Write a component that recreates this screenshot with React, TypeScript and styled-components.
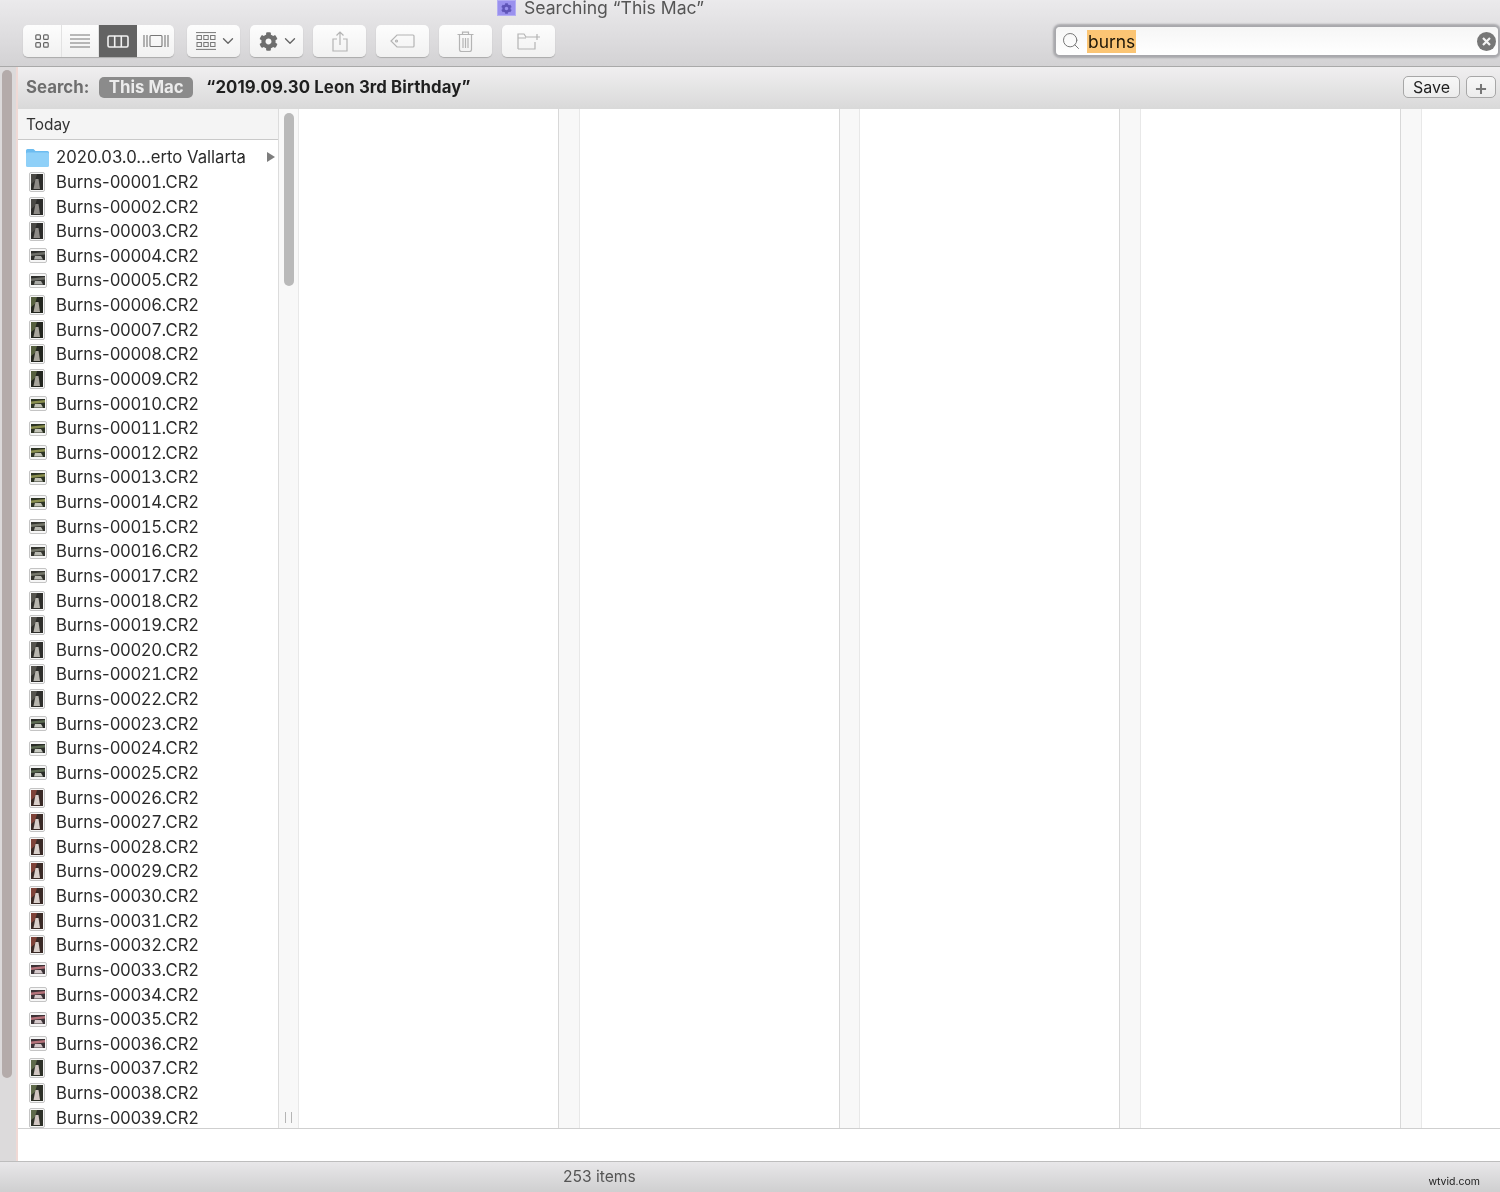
import React from 'react';
import styled, { createGlobalStyle } from 'styled-components';
import { ChevronDown, Search as SearchGlyph } from 'lucide-react';
import { FaCog } from 'react-icons/fa';

const GlobalStyle = createGlobalStyle`
  html, body {
    margin: 0;
    padding: 0;
    background: #fff;
  }
  * {
    box-sizing: border-box;
  }
`;

type Shot = { wide?: boolean; base: string; light: string; accent: string };

const groups: { count: number; shot: Shot }[] = [
  { count: 3, shot: { base: '#2c2c2a', light: '#8d8a86', accent: '#4a4945' } },
  { count: 2, shot: { wide: true, base: '#2e2f2c', light: '#a9aaa6', accent: '#6d6e68' } },
  { count: 4, shot: { base: '#23261f', light: '#a8a59c', accent: '#56603f' } },
  { count: 5, shot: { wide: true, base: '#2c3324', light: '#c3c4b8', accent: '#8a8f4f' } },
  { count: 3, shot: { wide: true, base: '#34352f', light: '#b9bab2', accent: '#74766a' } },
  { count: 5, shot: { base: '#2f2f2c', light: '#b7b5ae', accent: '#55544e' } },
  { count: 3, shot: { wide: true, base: '#2a2c28', light: '#c8cac2', accent: '#5c6a52' } },
  { count: 7, shot: { base: '#3a2a26', light: '#d9cfca', accent: '#7e4238' } },
  { count: 4, shot: { wide: true, base: '#3b3236', light: '#d5c9cb', accent: '#b5727a' } },
  { count: 3, shot: { base: '#2e3128', light: '#d2c6c2', accent: '#5f6a4a' } },
];

const files = groups.flatMap((g) => Array.from({ length: g.count }, () => g.shot));

const fileNumber = (i: number) => String(i + 1).padStart(5, '0');

export default function App() {
  return (
    <>
      <GlobalStyle />
      <Window>
        <Toolbar>
          <TitleRow>
            <ProxyIcon>
              <FaCog size={11} color="#5f55b8" />
            </ProxyIcon>
            <span>Searching “This Mac”</span>
          </TitleRow>
          <ToolRow>
            <Segments>
              <Segment>
                <svg width="14" height="14" viewBox="0 0 14 14" fill="none" stroke="#666" strokeWidth="1.2">
                  <rect x="0.8" y="0.8" width="4.6" height="4.6" rx="1" />
                  <rect x="8.6" y="0.8" width="4.6" height="4.6" rx="1" />
                  <rect x="0.8" y="8.6" width="4.6" height="4.6" rx="1" />
                  <rect x="8.6" y="8.6" width="4.6" height="4.6" rx="1" />
                </svg>
              </Segment>
              <Segment>
                <svg width="20" height="14" viewBox="0 0 20 14" stroke="#777" strokeWidth="1.1">
                  <path d="M0 1h20M0 5h20M0 9h20M0 13h20" />
                </svg>
              </Segment>
              <Segment $active>
                <svg width="22" height="13" viewBox="0 0 22 13" fill="none" stroke="#f2f2f2" strokeWidth="1.6">
                  <rect x="1" y="1" width="20" height="11" rx="1.5" />
                  <path d="M7.7 1v11M14.3 1v11" />
                </svg>
              </Segment>
              <Segment>
                <svg width="26" height="14" viewBox="0 0 26 14" fill="none" stroke="#777" strokeWidth="1.1">
                  <rect x="7" y="1.5" width="12" height="11" rx="1" />
                  <path d="M1 1v12M4 1v12M22 1v12M25 1v12" />
                </svg>
              </Segment>
            </Segments>
            <ToolButton $menu>
              <svg width="20" height="18" viewBox="0 0 20 18" fill="none" stroke="#777" strokeWidth="1">
                <path d="M0 .6h20M0 17.4h20" />
                <rect x="1" y="3.5" width="4.4" height="4" />
                <rect x="7.8" y="3.5" width="4.4" height="4" />
                <rect x="14.6" y="3.5" width="4.4" height="4" />
                <rect x="1" y="10.5" width="4.4" height="4" />
                <rect x="7.8" y="10.5" width="4.4" height="4" />
                <rect x="14.6" y="10.5" width="4.4" height="4" />
              </svg>
              <ChevronDown size={18} strokeWidth={1.8} color="#666" />
            </ToolButton>
            <ToolButton $menu>
              <FaCog size={19} color="#6e6e6e" />
              <ChevronDown size={18} strokeWidth={1.8} color="#666" />
            </ToolButton>
            <ToolButton>
              <svg width="16" height="21" viewBox="0 0 16 21" fill="none" stroke="#b4b4b4" strokeWidth="1.2">
                <path d="M5 8H1v12h14V8h-4M8 14V1M4.5 4.5 8 1l3.5 3.5" />
              </svg>
            </ToolButton>
            <ToolButton>
              <svg width="25" height="14" viewBox="0 0 25 14" fill="none" stroke="#b4b4b4" strokeWidth="1.2">
                <path d="M7 1h16a1 1 0 0 1 1 1v10a1 1 0 0 1-1 1H7L1 7z" />
                <circle cx="6.5" cy="7" r="1" />
              </svg>
            </ToolButton>
            <ToolButton>
              <svg width="17" height="21" viewBox="0 0 17 21" fill="none" stroke="#b4b4b4" strokeWidth="1.2">
                <path d="M.5 3.5h16M5.5 3.5V1.2h6v2.3M2.5 3.5v15a2 2 0 0 0 2 2h8a2 2 0 0 0 2-2v-15M6 7v10M8.5 7v10M11 7v10" />
              </svg>
            </ToolButton>
            <ToolButton>
              <svg width="24" height="17" viewBox="0 0 24 17" fill="none" stroke="#b4b4b4" strokeWidth="1.2">
                <path d="M1 16V1h6l2 3h9M1 16h17v-7M1 5h8M20 1v6M17 4h6" />
              </svg>
            </ToolButton>
            <SearchField>
              <SearchGlyph size={20} strokeWidth={1.2} color="#777" />
              <Query>burns</Query>
              <ClearButton>
                <svg width="19" height="19" viewBox="0 0 19 19">
                  <circle cx="9.5" cy="9.5" r="9.5" fill="#777" />
                  <path d="M6 6l7 7M13 6l-7 7" stroke="#f4f4f4" strokeWidth="2.2" />
                </svg>
              </ClearButton>
            </SearchField>
          </ToolRow>
        </Toolbar>

        <Body>
          <SideStrip>
            <StripThumb />
          </SideStrip>
          <Main>
            <ScopeBar>
              <ScopeLabel>Search:</ScopeLabel>
              <ScopePill>This Mac</ScopePill>
              <ScopeName>“2019.09.30 Leon 3rd Birthday”</ScopeName>
              <ScopeActions>
                <SmallButton $wide>Save</SmallButton>
                <SmallButton>+</SmallButton>
              </ScopeActions>
            </ScopeBar>
            <Columns>
              <FileColumn>
                <ColumnHeader>Today</ColumnHeader>
                <FileList>
                  <FileRow>
                    <IconSlot>
                      <svg width="23" height="19" viewBox="0 0 23 19">
                        <path d="M0 2.5A1.5 1.5 0 0 1 1.5 1h6L9.5 3H21.5A1.5 1.5 0 0 1 23 4.5V6H0z" fill="#6cbcf0" />
                        <rect y="4.5" width="23" height="14.5" rx="1.5" fill="#8fd0f8" />
                      </svg>
                    </IconSlot>
                    <FileName>2020.03.0...erto Vallarta</FileName>
                    <Disclosure />
                  </FileRow>
                  {files.map((shot, i) => (
                    <FileRow key={i}>
                      <IconSlot $inset>
                        <Thumb shot={shot} />
                      </IconSlot>
                      <FileName>
                        Burns-<Digits>{fileNumber(i)}</Digits>.CR2
                      </FileName>
                    </FileRow>
                  ))}
                </FileList>
              </FileColumn>
              <Gutter>
                <ScrollThumb />
                <ResizeGrip />
              </Gutter>
              <EmptyColumn />
              <Gutter />
              <EmptyColumn />
              <Gutter />
              <EmptyColumn />
              <Gutter />
              <EmptyColumn />
              <Gutter />
              <LastColumn />
            </Columns>
            <PathBar />
          </Main>
        </Body>

        <StatusBar>
          <ItemCount>253 items</ItemCount>
          <Watermark>wtvid.com</Watermark>
        </StatusBar>
      </Window>
    </>
  );
}

function Thumb({ shot }: { shot: Shot }) {
  if (shot.wide) {
    return (
      <svg width="18" height="15" viewBox="0 0 18 15">
        <rect x="0.5" y="0.5" width="17" height="14" rx="1.5" fill="#f6f6f6" stroke="#c4c4c4" />
        <rect x="2" y="3" width="14" height="9" fill={shot.base} />
        <path d="M2 5.5 16 4v2.5L2 8z" fill={shot.accent} />
        <path d="M6 8h6l2 3.5H5z" fill={shot.light} />
      </svg>
    );
  }
  return (
    <svg width="16" height="20" viewBox="0 0 16 20">
      <rect x="0.5" y="0.5" width="15" height="19" rx="1.5" fill="#f6f6f6" stroke="#c4c4c4" />
      <rect x="2" y="2" width="12" height="16" fill={shot.base} />
      <path d="M2 2h6L6 9 2 12z" fill={shot.accent} />
      <path d="M6.5 7h3l1.5 10H4.5z" fill={shot.light} />
    </svg>
  );
}

const Window = styled.div`
  width: 1500px;
  height: 1192px;
  display: flex;
  flex-direction: column;
  overflow: hidden;
  font-family: Inter, 'Liberation Sans', sans-serif;
  color: #2a2a2a;
  filter: blur(0.5px);
`;

const Toolbar = styled.header`
  height: 67px;
  flex: none;
  overflow: hidden;
  background: linear-gradient(#ebeaec, #d3d2d4);
  border-bottom: 1px solid #a9a9a9;
`;

const TitleRow = styled.div`
  height: 16px;
  padding-left: 497px;
  display: flex;
  align-items: center;
  gap: 8px;
  font-size: 17.6px;
  line-height: 16px;
  color: #555;
`;

const ProxyIcon = styled.div`
  width: 19px;
  height: 16px;
  display: flex;
  align-items: center;
  justify-content: center;
  background: #9a91ee;
  border: 1px solid #b3adf3;
`;

const ToolRow = styled.div`
  height: 34px;
  margin-top: 8px;
  padding-left: 23px;
  display: flex;
  align-items: center;
  gap: 10px;
`;

const Segments = styled.div`
  width: 151px;
  height: 32px;
  flex: none;
  margin-right: 3px;
  display: grid;
  grid-template-columns: 39px 37px 38px 37px;
  border-radius: 5px;
  overflow: hidden;
  background: linear-gradient(#fdfdfd, #f1f1f1);
  box-shadow: 0 1px 1px #aaa;
`;

const Segment = styled.div<{ $active?: boolean }>`
  display: flex;
  align-items: center;
  justify-content: center;
  background: ${(p) => (p.$active ? '#636363' : 'transparent')};
  border-right: 1px solid ${(p) => (p.$active ? '#636363' : '#e2e2e2')};
  &:last-child {
    border-right: 0;
  }
`;

const ToolButton = styled.div<{ $menu?: boolean }>`
  width: 53px;
  height: 32px;
  flex: none;
  padding-left: ${(p) => (p.$menu ? '9px' : '0')};
  display: flex;
  align-items: center;
  justify-content: ${(p) => (p.$menu ? 'flex-start' : 'center')};
  gap: 3px;
  border-radius: 5px;
  background: linear-gradient(#fdfdfd, #f1f1f1);
  box-shadow: 0 1px 1px #aaa;
`;

const SearchField = styled.div`
  width: 442px;
  height: 28px;
  flex: none;
  margin-left: auto;
  margin-right: 2px;
  padding: 0 2px 0 5px;
  display: flex;
  align-items: center;
  gap: 6px;
  background: linear-gradient(#f6f6f6, #ffffff);
  border-radius: 4px;
  box-shadow: 0 0 2px 3px #a8a8ac;
`;

const Query = styled.span`
  padding: 0 1px;
  background: #fbc574;
  font-size: 17.4px;
  line-height: 23px;
  color: #1c1608;
`;

const ClearButton = styled.div`
  margin-left: auto;
  display: flex;
`;

const Body = styled.div`
  flex: 1;
  min-height: 0;
  display: flex;
`;

const SideStrip = styled.aside`
  width: 18px;
  flex: none;
  padding: 3px 5px 0 2px;
  background: #dcdadb;
  border-right: 2px solid #efd9d5;
`;

const StripThumb = styled.div`
  width: 10px;
  height: 1008px;
  border-radius: 5px;
  background: #b4abaa;
`;

const Main = styled.main`
  flex: 1;
  min-width: 0;
  display: flex;
  flex-direction: column;
`;

const ScopeBar = styled.div`
  height: 42px;
  flex: none;
  padding: 0 4px 2px 8px;
  display: flex;
  align-items: center;
  background: linear-gradient(#f0eff0, #d9d9d9);
  font-size: 16.8px;
  font-weight: 700;
`;

const ScopeLabel = styled.span`
  color: #6e6e6e;
`;

const ScopePill = styled.span`
  width: 94px;
  height: 21px;
  margin-left: 10px;
  display: flex;
  align-items: center;
  justify-content: center;
  border-radius: 5px;
  background: #8b8b8b;
  color: #ececec;
`;

const ScopeName = styled.span`
  margin-left: 13px;
  letter-spacing: 0.1px;
  color: #1f1f1f;
`;

const ScopeActions = styled.div`
  margin-left: auto;
  display: flex;
  gap: 6px;
`;

const SmallButton = styled.div<{ $wide?: boolean }>`
  width: ${(p) => (p.$wide ? '57px' : '30px')};
  height: 22px;
  display: flex;
  align-items: center;
  justify-content: center;
  border: 1px solid #a7a7a7;
  border-radius: 5px;
  background: linear-gradient(#f7f7f7, #ececec);
  font-size: ${(p) => (p.$wide ? '16px' : '21px')};
  font-weight: ${(p) => (p.$wide ? 400 : 500)};
  color: ${(p) => (p.$wide ? '#222' : '#777')};
`;

const Columns = styled.div`
  flex: 1;
  min-height: 0;
  display: flex;
  background: #fff;
`;

const FileColumn = styled.section`
  width: 260.6px;
  flex: none;
  display: flex;
  flex-direction: column;
  border-right: 1px solid #dcdcdc;
`;

const ColumnHeader = styled.div`
  height: 31px;
  flex: none;
  padding-left: 8px;
  display: flex;
  align-items: center;
  background: #f4f4f4;
  border-bottom: 1px solid #c9c9c9;
  font-size: 15.4px;
  color: #333;
`;

const FileList = styled.div`
  flex: 1;
  min-height: 0;
  padding-top: 5px;
  overflow: hidden;
`;

const FileRow = styled.div`
  height: 24.63px;
  padding: 0 3px 0 8px;
  display: flex;
  align-items: center;
`;

const IconSlot = styled.div<{ $inset?: boolean }>`
  width: 30px;
  flex: none;
  display: flex;
  align-items: center;
  padding-left: ${(p) => (p.$inset ? '3px' : '0')};
`;

const FileName = styled.span`
  font-size: 16.7px;
  color: #2b2b2b;
`;

const Digits = styled.span`
  font-variant-numeric: tabular-nums;
  letter-spacing: -0.45px;
`;

const Disclosure = styled.span`
  margin-left: auto;
  width: 0;
  height: 0;
  border-left: 8px solid #7d7d7d;
  border-top: 5px solid transparent;
  border-bottom: 5px solid transparent;
`;

const Gutter = styled.div`
  width: 19.6px;
  flex: none;
  padding: 4px 4px 5px 5px;
  display: flex;
  flex-direction: column;
  justify-content: space-between;
  align-items: center;
  background: #f8f8f8;
`;

const ScrollThumb = styled.div`
  width: 10px;
  height: 173px;
  border-radius: 5px;
  background: #b9b9b9;
`;

const ResizeGrip = styled.div`
  width: 7px;
  height: 11px;
  border-left: 1px solid #b5b5b5;
  border-right: 1px solid #b5b5b5;
`;

const EmptyColumn = styled.div`
  width: 261px;
  flex: none;
  border-left: 1px solid #e8e8e8;
  border-right: 1px solid #d8d8d8;
`;

const LastColumn = styled.div`
  flex: 1;
  border-left: 1px solid #e8e8e8;
`;

const PathBar = styled.div`
  height: 33px;
  flex: none;
  background: #fff;
  border-top: 1px solid #cfcfcf;
`;

const StatusBar = styled.footer`
  height: 31px;
  flex: none;
  padding: 0 20px 1px 563px;
  display: flex;
  align-items: center;
  justify-content: space-between;
  background: linear-gradient(#e8e7e9, #cfcfd0);
  border-top: 1px solid #bdbdbd;
`;

const ItemCount = styled.span`
  font-size: 15.6px;
  color: #555;
`;

const Watermark = styled.span`
  font-size: 10.5px;
  margin-top: 9px;
  color: #222;
`;
